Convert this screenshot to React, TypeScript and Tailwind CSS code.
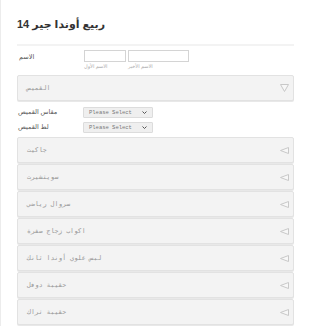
import React from 'react'

const sections = [
  'جاكيت',
  'سويتشيرت',
  'سروال رياضي',
  'اكواب زجاج صفرة',
  'لبس علوي أوندا ثانك',
  'حقيبة دوفل',
  'حقيبة تراك',
]

function DownArrow() {
  return (
    <svg width="9" height="8" viewBox="0 0 9 8">
      <path d="M0.5 0.5 H8.5 L4.5 7.5 Z" fill="#f7f7f7" stroke="#c8c8c8" strokeWidth="1" strokeLinejoin="round" />
    </svg>
  )
}

function LeftArrow() {
  return (
    <svg width="9" height="7" viewBox="0 0 9 7">
      <path d="M8.5 0.5 V6.5 L0.5 3.5 Z" fill="#f7f7f7" stroke="#c8c8c8" strokeWidth="1" strokeLinejoin="round" />
    </svg>
  )
}

function SectionBar({ title, open }: { title: string; open?: boolean }) {
  return (
    <div className="h-[26px] flex items-center justify-between pl-[9px] pr-[4px] bg-[#f3f3f3] border border-[#e2e2e2] rounded-[2px] shadow-[0_1px_0_#e8e8e8]">
      <span className="font-['DejaVu_Sans_Mono',monospace] text-[6.5px] leading-none tracking-[0.3px] text-[#999]">
        {title}
      </span>
      {open ? <DownArrow /> : <LeftArrow />}
    </div>
  )
}

function SelectRow({ label }: { label: string }) {
  return (
    <div className="flex items-center h-[15px]">
      <div className="w-[66px] pl-[1px] text-[6.5px] leading-none text-[#555]">{label}</div>
      <div className="w-[70px] h-[11px] flex items-center justify-between px-[5px] bg-[#efefef] border border-[#dcdcdc] rounded-[1px]">
        <span className="font-['Liberation_Mono',monospace] text-[5.5px] leading-none text-[#777]">Please Select</span>
        <svg width="5" height="3" viewBox="0 0 5 3">
          <path d="M0.5 0.5 L2.5 2.5 L4.5 0.5" fill="none" stroke="#555" strokeWidth="1" />
        </svg>
      </div>
    </div>
  )
}

export default function App() {
  return (
    <div className="w-[310px] h-[326px] overflow-hidden bg-white border-l border-[#ececec] font-['Liberation_Sans','DejaVu_Sans',sans-serif] leading-none">
      <div className="pl-[16px] pr-[16px]">
        {/* Title */}
        <div className="mt-[17px] h-[15px] flex items-center text-[11px] font-bold text-[#333]">
          ربيع أوندا جير 14
        </div>

        <div className="mt-[12px] h-[2px] bg-[#f3f3f3]" />

        {/* Name */}
        <div className="mt-[4px] flex">
          <div className="w-[67px] pt-[4px] pl-[2px] text-[6.5px] text-[#555]">الاسم</div>
          <div className="flex gap-[2px]">
            <div className="flex flex-col">
              <div className="w-[42px] h-[12px] border border-[#d4d4d4] bg-white" />
              <div className="h-[8px] flex items-center text-[5px] text-[#aaa]">الاسم الأول</div>
            </div>
            <div className="flex flex-col">
              <div className="w-[61px] h-[12px] border border-[#d4d4d4] bg-white" />
              <div className="h-[8px] flex items-center text-[5px] text-[#aaa]">الاسم الأخير</div>
            </div>
          </div>
        </div>

        <div className="mt-[5px]">
          <SectionBar title="القميص" open />
        </div>

        <div className="mt-[4px] flex flex-col">
          <SelectRow label="مقاس القميص" />
          <SelectRow label="لط القميص" />
        </div>

        <div className="mt-[2px] flex flex-col gap-[1px]">
          {sections.map((s) => (
            <SectionBar key={s} title={s} />
          ))}
        </div>
      </div>
    </div>
  )
}
